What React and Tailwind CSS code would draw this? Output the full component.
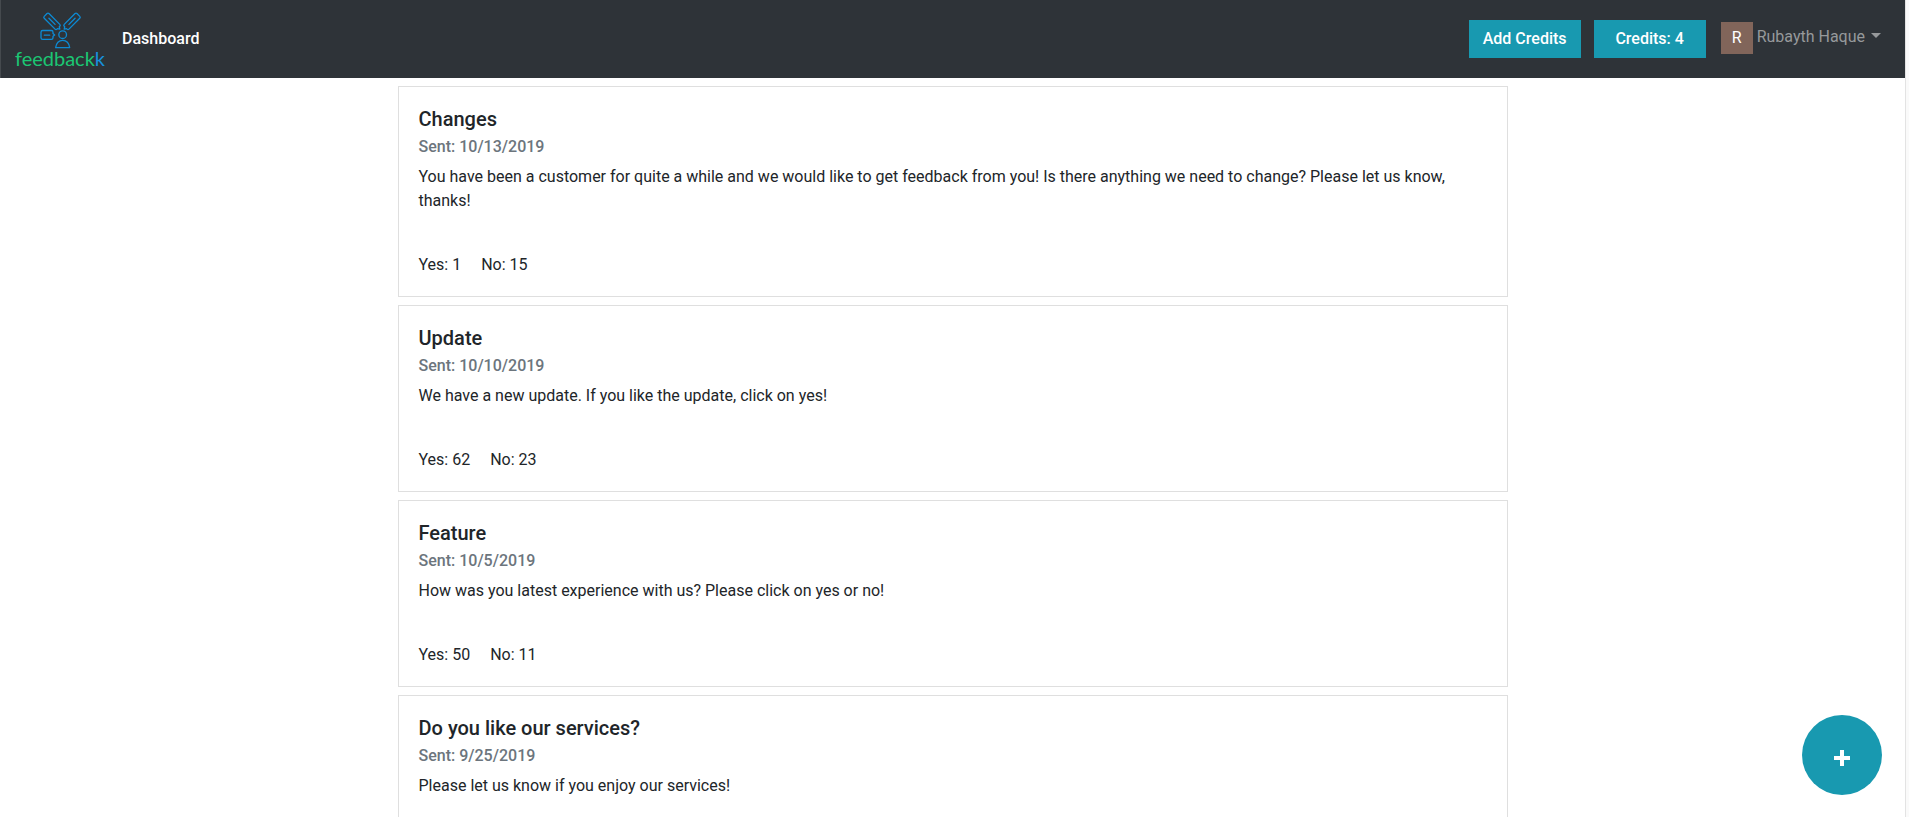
const surveys = [
  { title: 'Changes', sent: '10/13/2019', body: 'You have been a customer for quite a while and we would like to get feedback from you! Is there anything we need to change? Please let us know, thanks!', yes: 1, no: 15 },
  { title: 'Update', sent: '10/10/2019', body: 'We have a new update. If you like the update, click on yes!', yes: 62, no: 23 },
  { title: 'Feature', sent: '10/5/2019', body: 'How was you latest experience with us? Please click on yes or no!', yes: 50, no: 11 },
  { title: 'Do you like our services?', sent: '9/25/2019', body: 'Please let us know if you enjoy our services!' },
];

function Logo() {
  return (
    <a href="#home" aria-label="feedbackk" className="flex w-[90px] flex-col items-center">
      <svg className="h-[42px] w-[50px]" viewBox="0 0 150 126" fill="none" stroke="#0d8ad3" strokeWidth="4" strokeLinejoin="round" strokeLinecap="round" aria-hidden="true">
        <g transform="translate(51 40) rotate(45)">
          <path d="M-23 -10H23q4 0 4 4V-4l6 4-6 4v2q0 4-4 4H-23q-4 0-4-4V-6q0-4 4-4Z" />
          <path d="M-13 0H13" />
        </g>
        <g transform="translate(111 40) rotate(135)">
          <path d="M-23 -10H23q4 0 4 4V-4l6 4-6 4v2q0 4-4 4H-23q-4 0-4-4V-6q0-4 4-4Z" />
          <path d="M-13 0H13" />
        </g>
        <path d="M23 67.500H49q5 0 5 5v4l5 4.500-5 4v4q0 5-5 5H23q-5 0-5-5v-16.500q0-5 5-5ZM28 81.500h16" />
        <circle cx="83" cy="80" r="11.500" />
        <path d="M62 119q3-22 21-22t21 22Z" />
      </svg>
      <span className="-mt-1 font-['Lato',sans-serif] text-xl leading-6 font-normal text-[#1bc673]">feedback<span className="text-[#1790dc]">k</span></span>
    </a>
  );
}

function Survey({ title, sent, body, yes, no }) {
  return (
    <article className="border border-[#dfdfdf] bg-white px-5 pt-5 pb-[19px]">
      <h2 className="text-xl leading-6 font-medium">{title}</h2>
      <h3 className="mt-1.5 mb-[9px] leading-[19px] font-medium text-[#6c757d]">Sent: {sent}</h3>
      <p className="leading-6">{body}</p>
      <div className="mt-10 flex min-h-6 gap-5 leading-6">
        {yes !== undefined && <span>Yes: {yes}</span>}
        {no !== undefined && <span>No: {no}</span>}
      </div>
    </article>
  );
}

export default function App() {
  return (
    <div className="flex h-screen overflow-hidden bg-white font-['Roboto',sans-serif] text-base text-[#212529]">
      <div className="flex min-w-0 flex-1 flex-col">
        <nav className="flex h-[78px] shrink-0 items-center border-l border-[#454a4e] bg-[#2e3338] pr-6 pl-[14px]">
          <Logo />
          <a href="#dashboard" className="ml-[17px] font-medium text-white">Dashboard</a>
          <div className="ml-auto flex items-center">
            <button type="button" className="h-[38px] w-28 bg-[#1899b0] font-medium text-white">Add Credits</button>
            <button type="button" className="ml-[13px] h-[38px] w-28 bg-[#1899b0] font-medium text-white">Credits: 4</button>
            <button type="button" className="ml-[15px] flex items-start pb-0.5 text-[#96999b]">
              <span className="flex size-8 items-center justify-center bg-[#81655a] text-white">R</span>
              <span className="ml-1 leading-[30px]">Rubayth Haque</span>
              <svg className="mt-[11px] ml-1.5 h-[5px] w-[10px]" viewBox="0 0 10 5" fill="currentColor" aria-hidden="true"><path d="M0 0h10L5 5Z" /></svg>
            </button>
          </div>
        </nav>
        <main className="min-h-0 flex-1 overflow-hidden pt-2">
          <div className="mx-auto flex max-w-[1110px] flex-col gap-2">
            {surveys.map((s) => <Survey key={s.title} {...s} />)}
          </div>
        </main>
      </div>
      <div className="w-1 shrink-0 border-l border-[#e3e3e3] bg-[#fafafa]" />
      <button type="button" aria-label="New survey" className="fixed right-[27px] bottom-[22px] flex size-20 items-center justify-center rounded-full bg-[#1899b0] pt-1.5 text-white">
        <svg className="size-4" viewBox="0 0 16 16" fill="currentColor" aria-hidden="true"><path d="M6 0h4v6h6v4h-6v6H6v-6H0V6h6Z" /></svg>
      </button>
    </div>
  );
}
